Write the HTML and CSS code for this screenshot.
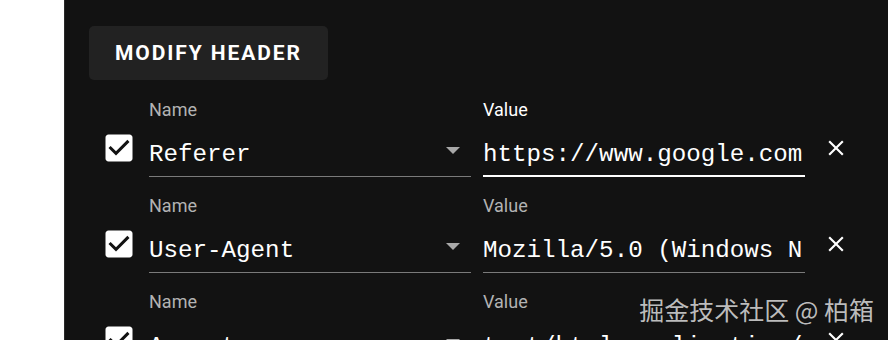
FILE: index.html
```html
<!DOCTYPE html>
<html>
<head>
<meta charset="utf-8">
<link rel="stylesheet" href="styles.css">
</head>
<body>
<div class="panel">
  <button class="modify-btn">MODIFY HEADER</button>
  <div class="rows">
    <div class="row">
      <svg class="checkbox" viewBox="0 0 24 24"><path fill="#fff" d="M19 3H5c-1.11 0-2 .9-2 2v14c0 1.1.89 2 2 2h14c1.11 0 2-.9 2-2V5c0-1.1-.89-2-2-2zm-9 14l-5-5 1.41-1.41L10 14.17l7.590-7.59L19 8l-9 9z"/></svg>
      <div class="field">
        <div class="label">Name</div>
        <div class="input select"><span class="text">Referer</span><svg class="arrow" viewBox="0 0 14 7"><path d="M0 0h14L7 7z"/></svg></div>
      </div>
      <div class="field">
        <div class="label focused">Value</div>
        <div class="input focused"><span class="text">https://www.google.com</span></div>
      </div>
      <svg class="close" viewBox="0 0 24 24"><path d="M19 6.41L17.59 5 12 10.59 6.41 5 5 6.41 10.59 12 5 17.59 6.41 19 12 13.41 17.59 19 19 17.59 13.41 12z"/></svg>
    </div>
    <div class="row">
      <svg class="checkbox" viewBox="0 0 24 24"><path fill="#fff" d="M19 3H5c-1.11 0-2 .9-2 2v14c0 1.1.89 2 2 2h14c1.11 0 2-.9 2-2V5c0-1.1-.89-2-2-2zm-9 14l-5-5 1.41-1.41L10 14.17l7.59-7.59L19 8l-9 9z"/></svg>
      <div class="field">
        <div class="label">Name</div>
        <div class="input select"><span class="text">User-Agent</span><svg class="arrow" viewBox="0 0 14 7"><path d="M0 0h14L7 7z"/></svg></div>
      </div>
      <div class="field">
        <div class="label">Value</div>
        <div class="input"><span class="text">Mozilla/5.0 (Windows NT 10.0; Win64; x64)</span></div>
      </div>
      <svg class="close" viewBox="0 0 24 24"><path d="M19 6.41L17.59 5 12 10.59 6.41 5 5 6.41 10.59 12 5 17.59 6.41 19 12 13.41 17.59 19 19 17.59 13.41 12z"/></svg>
    </div>
    <div class="row">
      <svg class="checkbox" viewBox="0 0 24 24"><path fill="#fff" d="M19 3H5c-1.11 0-2 .9-2 2v14c0 1.1.89 2 2 2h14c1.11 0 2-.9 2-2V5c0-1.1-.89-2-2-2zm-9 14l-5-5 1.41-1.41L10 14.17l7.59-7.59L19 8l-9 9z"/></svg>
      <div class="field">
        <div class="label">Name</div>
        <div class="input select"><span class="text">Accept</span><svg class="arrow" viewBox="0 0 14 7"><path d="M0 0h14L7 7z"/></svg></div>
      </div>
      <div class="field">
        <div class="label">Value</div>
        <div class="input"><span class="text">text/html,application/xhtml+xml</span></div>
      </div>
      <svg class="close" viewBox="0 0 24 24"><path d="M19 6.41L17.59 5 12 10.59 6.41 5 5 6.41 10.59 12 5 17.59 6.41 19 12 13.41 17.59 19 19 17.59 13.41 12z"/></svg>
    </div>
  </div>
  <div class="watermark">掘金技术社区 @ 柏箱</div>
</div>
</body>
</html>
```
FILE: styles.css
```css
html, body {
  margin: 0;
  padding: 0;
  background: #ffffff;
  height: 100%;
  overflow: hidden;
}
body {
  font-family: Roboto, "Noto Sans", sans-serif;
}
.panel {
  position: relative;
  margin-left: 64px;
  min-height: 340px;
  background: #121212;
  border-left: 1px solid #2a2a2a;
  padding: 26px 0 0 24px;
  box-sizing: border-box;
}
.modify-btn {
  display: block;
  height: 54px;
  padding: 0 26px 0 26px;
  background: #222222;
  color: #ffffff;
  border: none;
  border-radius: 5px;
  font-family: Roboto, sans-serif;
  font-weight: 700;
  font-size: 21px;
  letter-spacing: 1.9px;
  margin: 0 0 16px 0;
}
.rows {
  display: flex;
  flex-direction: column;
}
.row {
  display: flex;
  align-items: flex-start;
  height: 96px;
  padding-top: 4px;
  box-sizing: border-box;
}
.checkbox {
  width: 36px;
  height: 36px;
  margin: 30px 12px 0 12px;
  flex: none;
}
.field {
  width: 322px;
  margin-right: 12px;
  display: flex;
  flex-direction: column;
}
.label {
  font-size: 18px;
  line-height: 20px;
  color: #b3b3b3;
}
.label.focused {
  color: #ffffff;
}
.input {
  margin-top: 19px;
  display: flex;
  align-items: flex-start;
  height: 32px;
  padding-bottom: 5px;
  border-bottom: 1px solid #7a7a7a;
  font-family: "Liberation Mono", "DejaVu Sans Mono", monospace;
  font-size: 24.2px;
  line-height: 32px;
  color: #ffffff;
  overflow: hidden;
  white-space: nowrap;
}
.input.focused {
  padding-bottom: 4px;
  border-bottom: 2px solid #ffffff;
}
.text {
  flex: none;
  max-width: 22ch;
  overflow: hidden;
  text-overflow: clip;
}
.select .text {
  flex: 1;
}
.arrow {
  width: 14px;
  height: 7px;
  margin: 8px 11px 0 0;
  fill: #a8a8a8;
  flex: none;
}
.close {
  width: 26px;
  height: 26px;
  margin: 35px 0 0 6px;
  fill: #ffffff;
  flex: none;
}
.watermark {
  position: absolute;
  right: 14px;
  top: 294px;
  font-family: "Noto Sans CJK SC", sans-serif;
  font-size: 25px;
  line-height: 30px;
  color: rgba(220, 220, 220, 0.85);
}
```
